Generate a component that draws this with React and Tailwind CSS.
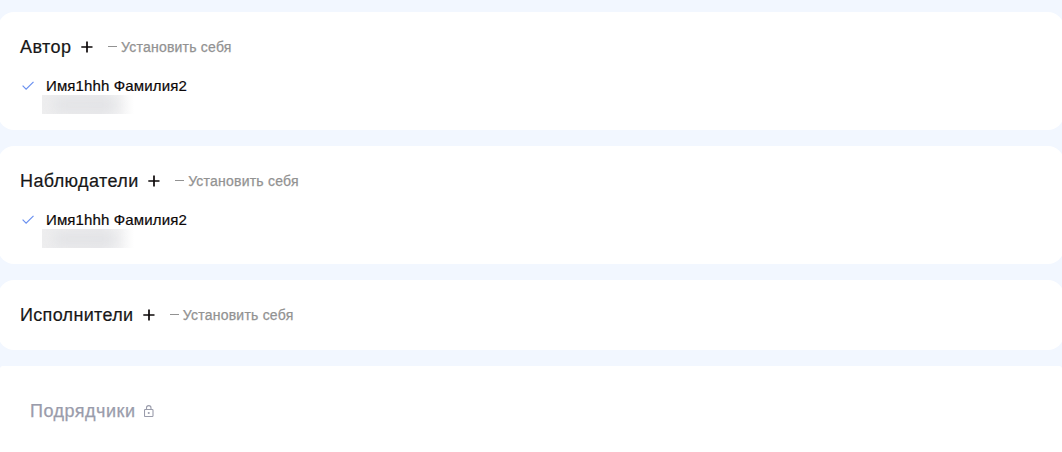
import React from 'react';

const PlusIcon = () => (
  <svg className="ml-[9.5px] h-3 w-3 shrink-0" viewBox="0 0 12 12" fill="none" stroke="#0c0809" strokeWidth="1.7">
    <path d="M0.3 6h11.2M6 0.4v11.2" />
  </svg>
);

const CheckIcon = () => (
  <svg className="h-3 w-3 shrink-0" viewBox="0 0 12 12" fill="none" stroke="#6a90f0" strokeWidth="1.2">
    <path d="M0.6 5.6l3.5 3.5 7.4-7.2" />
  </svg>
);

const LockIcon = () => (
  <svg className="ml-[9px] h-3 w-2.5 shrink-0" viewBox="0 0 10 12" fill="none" stroke="#9a9cab" strokeWidth="1.1">
    <rect x="0.5" y="4.5" width="8.5" height="7" rx="0.8" />
    <path d="M2.5 4.5V2.9a2.25 2.25 0 0 1 4.5 0v1.6M4.75 7v2M3.75 8h2" />
  </svg>
);

const Person = ({ name }) => (
  <div className="mt-[18px]">
    <div className="flex h-[19px] items-center pl-0.5">
      <CheckIcon />
      <span className="ml-3 text-[15px] leading-[19px] tracking-[0.13px] text-[#0c0809] [-webkit-text-stroke:0.2px]">
        {name}
      </span>
    </div>
    {/* Hidden contact line */}
    <div className="ml-[22px] h-[19px] w-[92px] overflow-hidden bg-[linear-gradient(90deg,#eeeeef,#ebebed_65%,#f3f3f4_85%,#ffffff)]">
      <div className="ml-3 mt-1 h-3 w-[62px] bg-[#e1e2e5] blur-[6px]" />
    </div>
  </div>
);

const RoleCard = ({ title, titleClass, people = [] }) => (
  <section className="-mx-0.5 rounded-2xl bg-white px-[22px] pt-6 pb-4">
    <div className="flex h-[22px] items-center">
      <h2 className={`text-[18px] leading-[22px] text-[#171717] [-webkit-text-stroke:0.2px] ${titleClass}`}>{title}</h2>
      <PlusIcon />
      <button className="ml-[15px] flex items-center text-[14px] leading-[22px] tracking-[0.22px] text-[#929292] [-webkit-text-stroke:0.25px]">
        <span className="mr-1 mb-0.5 h-px w-[9px] bg-[#929292]" />
        Установить себя
      </button>
    </div>
    {people.map((name) => (
      <Person key={name} name={name} />
    ))}
    {people.length === 0 && <div className="h-2" />}
  </section>
);

const roles = [
  { title: 'Автор', titleClass: 'tracking-[0.46px]', people: ['Имя1hhh Фамилия2'] },
  { title: 'Наблюдатели', titleClass: 'tracking-[0.4px]', people: ['Имя1hhh Фамилия2'] },
  { title: 'Исполнители', titleClass: 'tracking-[0.32px]', people: [] },
];

const App = () => {
  return (
    <div className="flex h-[452px] flex-col gap-4 overflow-hidden bg-[#f2f7ff] pt-3 font-['Liberation_Sans',Arial,sans-serif]">
      {roles.map((role) => (
        <RoleCard key={role.title} {...role} />
      ))}
      <section className="flex-1 rounded-t-[3px] bg-white px-[30px] pt-[34px]">
        <div className="flex h-[22px] items-center">
          <h2 className="text-[18px] leading-[22px] tracking-[0.5px] text-[#9a9cab] [-webkit-text-stroke:0.25px]">
            Подрядчики
          </h2>
          <LockIcon />
        </div>
      </section>
    </div>
  );
};

export default App;
